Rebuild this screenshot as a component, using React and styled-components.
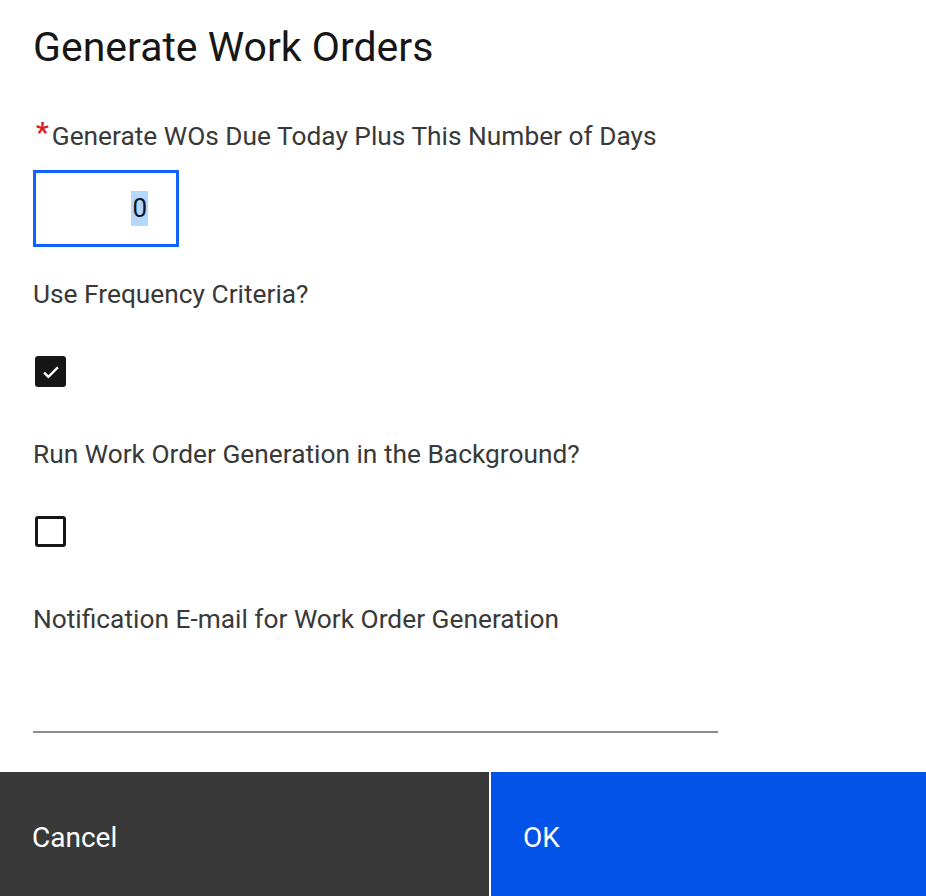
import React from "react";
import styled, { createGlobalStyle } from "styled-components";

const GlobalStyle = createGlobalStyle`
  html, body {
    margin: 0;
    padding: 0;
    background: #ffffff;
  }
  body {
    font-family: Roboto, "Noto Sans", "Liberation Sans", sans-serif;
    -webkit-font-smoothing: antialiased;
  }
`;

const Modal = styled.div`
  width: 926px;
  height: 896px;
  display: flex;
  flex-direction: column;
  overflow: hidden;
`;

const Body = styled.div`
  flex: 1;
  padding: 0 33px;
  display: flex;
  flex-direction: column;
`;

const Title = styled.h2`
  margin: 24px 0 0;
  font-size: 41px;
  font-weight: 400;
  line-height: 46px;
  color: #161616;
`;

const Label = styled.div`
  margin-top: ${(p) => p.top}px;
  font-size: 26.3px;
  line-height: 32px;
  color: #393939;
  display: flex;
  align-items: flex-start;
`;

const Required = styled.span`
  color: #da1e28;
  font-size: 28px;
  font-weight: 700;
  line-height: 26px;
  margin: 0 3px 0 3px;
`;

const NumberBox = styled.div`
  margin-top: 18px;
  width: 146px;
  height: 77px;
  box-sizing: border-box;
  border: 3px solid #0f62fe;
  display: flex;
  align-items: center;
  justify-content: flex-end;
  padding-right: 28px;
  font-size: 26px;
  color: #161616;
`;

const Selected = styled.span`
  background: #b3d7ff;
  padding: 0 1px;
  line-height: 35px;
`;

const Check = styled.div`
  margin: ${(p) => p.top}px 0 0 2px;
  width: 31px;
  height: 31px;
  box-sizing: border-box;
  border-radius: 3px;
  border: 3px solid #161616;
  background: ${(p) => (p.checked ? "#161616" : "#ffffff")};
  display: flex;
  align-items: center;
  justify-content: center;
`;

const Underline = styled.div`
  margin-top: 96px;
  width: 685px;
  height: 2px;
  background: #8d8d8d;
`;

const Footer = styled.div`
  margin-top: auto;
  height: 124px;
  display: flex;
  gap: 2px;
`;

const Button = styled.div`
  width: ${(p) => p.w}px;
  flex: ${(p) => (p.w ? "none" : 1)};
  background: ${(p) => (p.primary ? "#0353e9" : "#393939")};
  color: #ffffff;
  font-size: 28px;
  display: flex;
  align-items: center;
  padding-left: 32px;
  padding-top: 6px;
  box-sizing: border-box;
`;

const CheckMark = () => (
  <svg width="22" height="22" viewBox="0 0 16 16" fill="none">
    <path d="M3 8.4l3.1 3.1 6.9-6.9" stroke="#ffffff" strokeWidth="1.7" />
  </svg>
);

export default function App() {
  return (
    <>
      <GlobalStyle />
      <Modal>
        <Body>
          <Title>Generate Work Orders</Title>
          <Label top={50}>
            <Required>*</Required>
            Generate WOs Due Today Plus This Number of Days
          </Label>
          <NumberBox>
            <Selected>0</Selected>
          </NumberBox>
          <Label top={31}>Use Frequency Criteria?</Label>
          <Check top={46} checked>
            <CheckMark />
          </Check>
          <Label top={51}>Run Work Order Generation in the Background?</Label>
          <Check top={46} />
          <Label top={56}>Notification E-mail for Work Order Generation</Label>
          <Underline />
        </Body>
        <Footer>
          <Button w={489}>Cancel</Button>
          <Button primary>OK</Button>
        </Footer>
      </Modal>
    </>
  );
}
